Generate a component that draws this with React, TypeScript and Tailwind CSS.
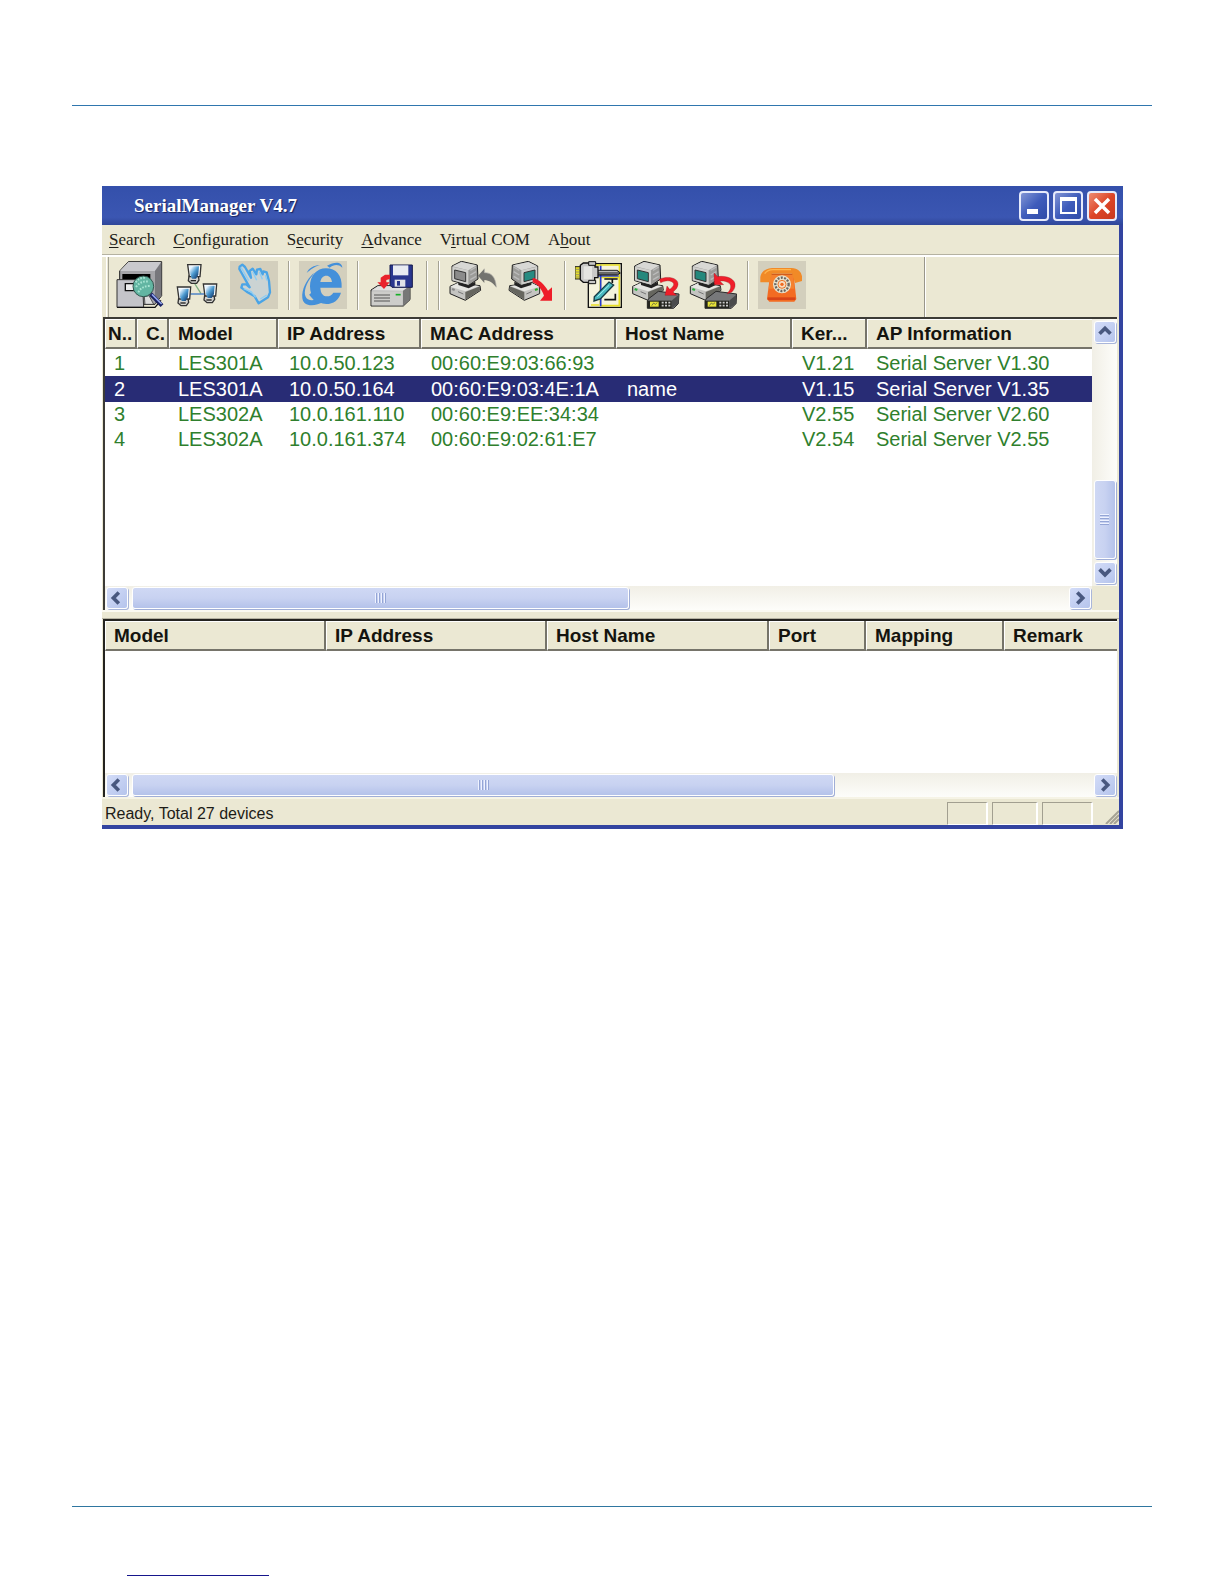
import React from "react";

type Device = {
  no: string;
  model: string;
  ip: string;
  mac: string;
  host: string;
  kernel: string;
  ap: string;
  selected?: boolean;
};

const devices: Device[] = [
  { no: "1", model: "LES301A", ip: "10.0.50.123", mac: "00:60:E9:03:66:93", host: "", kernel: "V1.21", ap: "Serial Server V1.30" },
  { no: "2", model: "LES301A", ip: "10.0.50.164", mac: "00:60:E9:03:4E:1A", host: "name", kernel: "V1.15", ap: "Serial Server V1.35", selected: true },
  { no: "3", model: "LES302A", ip: "10.0.161.110", mac: "00:60:E9:EE:34:34", host: "", kernel: "V2.55", ap: "Serial Server V2.60" },
  { no: "4", model: "LES302A", ip: "10.0.161.374", mac: "00:60:E9:02:61:E7", host: "", kernel: "V2.54", ap: "Serial Server V2.55" },
];

const menus: [string, string, string][] = [
  ["", "S", "earch"],
  ["", "C", "onfiguration"],
  ["S", "e", "curity"],
  ["", "A", "dvance"],
  ["V", "i", "rtual COM"],
  ["A", "b", "out"],
];

/* ---------- toolbar drawings ---------- */

function Art({ box, children }: { box: string; children: React.ReactNode }) {
  return (
    <svg viewBox={box} className="block size-12" aria-hidden="true">
      {children}
    </svg>
  );
}

function CabinetIcon() {
  return (
    <Art box="33 18 144 144">
      <path d="M44 48 70 20H170V122L150 148H44Z" fill="#a5a5a9" stroke="#222" strokeWidth="3" />
      <path d="M45 48 70 21H168L150 48Z" fill="#c9c9cd" />
      <path d="M150 48 169 22V122L150 147Z" fill="#77777c" />
      <path d="M52 57H136V75H52Z" fill="#000" />
      <path d="M36 74H112L116 157H36Z" fill="#c4c4c9" stroke="#333" strokeWidth="3" />
      <path d="M36 157H150L168 136" fill="none" stroke="#111" strokeWidth="4" />
      <path d="M61 86H92V107H61Z" fill="#eee" stroke="#111" strokeWidth="4" />
      <path d="M118 125 132 122 146 148H120Z" fill="#ddd" stroke="#222" strokeWidth="2" />
      <circle cx="115" cy="94" r="31" fill="#62b5a2" stroke="#32564f" strokeWidth="3" />
      <path d="M92 82q12-16 28-13M93 96q14-20 40-16M100 112q10-20 36-19" stroke="#a7e4d2" strokeWidth="6" strokeDasharray="5 4" fill="none" />
      <path d="M137 117 171 152" stroke="#182060" strokeWidth="12" />
      <path d="M141 118 170 147" stroke="#91a4ee" strokeWidth="5" />
    </Art>
  );
}

function Terminal({ x, y }: { x: number; y: number }) {
  return (
    <g transform={`translate(${x} ${y})`}>
      <path d="M5 36 3 50 12 58H28L35 48 33 36Z" fill="#d4d4d0" stroke="#333" strokeWidth="4" />
      <path d="M1 2H41L38 38H6Z" fill="#fff" stroke="#333" strokeWidth="4" />
      <path d="M6 7H35L33 32 26 44H14L9 32Z" fill="url(#screenShade)" />
      <path d="M10 50H26" stroke="#222" strokeWidth="4" />
    </g>
  );
}

function NetworkIcon() {
  return (
    <Art box="204 18 144 144">
      <defs>
        <linearGradient id="screenShade" x1="0" y1="0" x2="1" y2="1">
          <stop offset="0.15" stopColor="#e5f3ff" />
          <stop offset="0.5" stopColor="#4c9ad0" />
          <stop offset="0.9" stopColor="#123c70" />
        </linearGradient>
      </defs>
      <path d="M268 84 288 116" stroke="#7fae80" strokeWidth="4" />
      <path d="M256 117H300" stroke="#3d78c4" strokeWidth="4" />
      <Terminal x={247} y={27} />
      <Terminal x={216} y={94} />
      <Terminal x={294} y={85} />
    </Art>
  );
}

function HandIcon() {
  return (
    <Art box="375 18 144 144">
      <path
        d="M404 35 412 29 420 36 438 68 434 48 443 41 454 58 456 44 466 42 473 58 475 49 485 52 492 78 495 112 489 127 461 145 449 124 425 110 409 98 412 88 424 88 434 97 403 42Z"
        fill="#cbd3d3"
        stroke="#4aa4e6"
        strokeWidth="7"
        strokeLinejoin="round"
      />
      <path d="M408 37 431 77M443 50 455 76M463 50 472 73M481 60 486 77M416 101 438 110 452 127M466 132 485 120" fill="none" stroke="#8bcdf5" strokeWidth="4" />
    </Art>
  );
}

function BrowserIcon() {
  return (
    <Art box="627 243 144 144">
      <path
        d="M755 323H691C692 341 700 349 711 349 719 349 726 345 730 338H753C747 360 730 372 709 372 679 372 660 350 660 319 660 287 680 265 708 265 738 265 757 286 755 323ZM691 306H726C725 294 718 287 709 287 699 287 693 294 691 306Z"
        fill="#4490da"
        fillRule="evenodd"
      />
      <path d="M668 286C648 310 640 336 647 350 652 362 670 365 692 352L704 364C668 384 640 378 637 354 634 328 650 298 672 278ZM650 279C657 263 675 255 690 256 672 260 661 270 650 279ZM711 257C735 244 756 245 757 263 744 251 731 254 719 263Z" fill="#4490da" />
      <path d="M662 340 684 366" stroke="#4490da" strokeWidth="12" />
    </Art>
  );
}

function SaveIcon() {
  return (
    <Art box="834 243 144 144">
      <path d="M843 330 863 317H960V359L940 378H843Z" fill="#b9b9b9" stroke="#222" strokeWidth="3" />
      <path d="M845 331 865 319H957L940 332Z" fill="#e1e1df" />
      <path d="M939 332 958 319V358L939 377Z" fill="#777" />
      <path d="M845 334H938V376H845Z" fill="#cdcdca" />
      <path d="M852 345H900M852 354H900M852 363H900" stroke="#555" strokeWidth="3" />
      <path d="M917 344H932" stroke="#17ae27" strokeWidth="5" />
      <path d="M900 255H967V322H906L900 316Z" fill="#29368e" stroke="#151a4a" strokeWidth="3" />
      <path d="M909 256H955V286H909Z" fill="#e8ebf2" />
      <path d="M914 299H946V320H914Z" fill="#dfe1e7" />
      <path d="M921 303H930V317H921Z" fill="#29368e" />
      <path d="M900 284H885L872 293V307H862L882 327 899 307H889V300L900 297Z" fill="#e9222b" />
    </Art>
  );
}

/* Monitor on a desktop base, occupying roughly 96 x 118 units. */
function Computer({ screen, light }: { screen: string; light: string }) {
  return (
    <g strokeLinejoin="round">
      <path d="M2 76 24 66 92 74 94 88 48 118 2 98Z" fill="#c4c4c1" stroke="#222" strokeWidth="3" />
      <path d="M3 77 24 67 90 75 48 91Z" fill="#e6e6e2" />
      <path d="M48 93 92 76V88L48 116Z" fill="#66665f" />
      <path d="M27 62 57 71 78 62V72L58 82 27 72Z" fill="#222" />
      <path d="M8 15 36 1 84 12 86 54 58 73 8 59Z" fill="#9b9b98" stroke="#222" strokeWidth="3" />
      <path d="M9 16 36 3 82 13 57 28Z" fill="#d8d8d5" />
      <path d="M9 17 57 28V71L9 58Z" fill="#cfcfcc" />
      <path d="M16 27 49 35V62L16 53Z" fill={screen} stroke="#333" strokeWidth="3" />
      <path d="M63 28 80 18M63 42 80 32M63 56 80 46" stroke="#bbb" strokeWidth="4" />
      <path d="M8 84 16 87" stroke={light} strokeWidth="7" />
      <path d="M26 92 42 99" stroke="#777" strokeWidth="3" />
    </g>
  );
}

function PcUndoIcon() {
  return (
    <Art box="72 243 144 144">
      <g transform="translate(73 243)">
        <Computer screen="#8b8b8b" light="#888" />
      </g>
      <path d="M159 287 178 266V278C199 278 211 289 214 322 203 308 193 301 178 300V309Z" fill="#73736f" />
      <path d="M178 266V278C199 278 211 289 214 322" fill="none" stroke="#aaa9a4" strokeWidth="2" />
    </Art>
  );
}

function PcSendIcon() {
  return (
    <Art box="243 243 144 144">
      <g transform="translate(346 243) scale(-1 1)">
        <Computer screen="#278b82" light="#27ae27" />
      </g>
      <path d="M323 293C344 299 357 312 369 332L381 322V362H345L357 347C350 328 340 314 323 307Z" fill="#ee1d29" />
    </Art>
  );
}

function PortSettingsIcon() {
  return (
    <Art box="18 18 144 144">
      <path d="M58 26H157V157H58Z" fill="#f5f3dc" stroke="#111" strokeWidth="4" />
      <path d="M94 67H151V152H94Z" fill="none" stroke="#e9df25" strokeWidth="5" />
      <path d="M95 28V154" stroke="#263acb" strokeWidth="5" />
      <path d="M60 63H152" stroke="#263acb" strokeWidth="4" />
      <path d="M106 72H146M130 72V84M106 134H139V116" fill="none" stroke="#111" strokeWidth="5" />
      <path d="M80 30H151V65M66 150H90" fill="none" stroke="#e9df25" strokeWidth="4" />
      <path d="M76 125 120 81 134 90 94 132 75 138Z" fill="#49b9bf" stroke="#143a43" strokeWidth="4" />
      <path d="M85 125 120 91" stroke="#a2f0ee" strokeWidth="3" />
      <path d="M85 46H145L154 54 145 60H85Z" fill="#696969" stroke="#111" strokeWidth="3" />
      <path d="M88 49H145" stroke="#ccc" strokeWidth="3" />
      <path d="M34 31 43 24H78V36H87V68H77V82H43L34 74Z" fill="#c9c9c7" stroke="#111" strokeWidth="4" />
      <path d="M44 34H69V73H44Z" fill="#e5e5e1" />
      <path d="M18 35H33V72H18Z" fill="#e8df27" stroke="#222" strokeWidth="3" />
      <path d="M18 43H33M18 51H33M18 59H33M18 66H33" stroke="#777" strokeWidth="2" />
      <path d="M59 20H80V31H59ZM59 76H80V86H59Z" fill="#c9c9c7" stroke="#111" strokeWidth="3" />
    </Art>
  );
}

function ModemBody() {
  return (
    <g>
      <path d="M50 113 79 91 141 99 139 128 125 142H46V120Z" fill="#77787a" stroke="#2b2b2b" strokeWidth="3" />
      <path d="M46 119H119V141H46Z" fill="#24251f" />
      <path d="M120 118 140 101V127L120 141Z" fill="#4a4b4c" />
      <path d="M54 122H80V137H54Z" fill="#e7e339" />
      <path d="M59 134 65 126 70 130 76 125" fill="none" stroke="#444" strokeWidth="2" />
      <path d="M89 125H116M89 134H116" stroke="#c9c9c9" strokeWidth="5" strokeDasharray="6 4" />
    </g>
  );
}

function PcToDeviceIcon() {
  return (
    <Art box="189 18 144 144">
      <g transform="translate(189 18)">
        <Computer screen="#24887d" light="#27b43d" />
        <ModemBody />
        <path d="M82 55C105 43 141 50 138 71 136 83 128 88 123 93L134 103H99L105 75 113 85C125 77 130 67 119 62 108 57 99 60 86 65Z" fill="#f01e2a" stroke="#8d1820" strokeWidth="1" />
      </g>
    </Art>
  );
}

function DeviceToPcIcon() {
  return (
    <Art box="360 18 144 144">
      <g transform="translate(362 18)">
        <Computer screen="#24887d" light="#27b43d" />
        <ModemBody />
        <path d="M73 36 84 47C110 42 140 54 136 76 133 90 124 98 112 98 126 84 127 70 114 64 104 59 96 59 91 61L102 71H74Z" fill="#f01e2a" stroke="#8d1820" strokeWidth="1" />
      </g>
    </Art>
  );
}

function PhoneIcon() {
  return (
    <Art box="1002 243 144 144">
      <path d="M1038 287H1109L1117 357 1111 365H1036L1029 357Z" fill="#f36b22" />
      <path d="M1040 282H1107L1111 326H1034Z" fill="#f5812e" />
      <path d="M1009 307V291C1011 275 1025 265 1044 264H1103C1121 265 1132 275 1134 289V303L1113 309 1104 281H1044L1035 307Z" fill="#f18a27" />
      <path d="M1022 281Q1031 269 1047 269H1101" stroke="#ffb64e" strokeWidth="4" fill="none" />
      <path d="M1043 283H1105" stroke="#c9551b" strokeWidth="3" />
      <path d="M1031 356H1114" stroke="#d84418" strokeWidth="8" />
      <circle cx="1074" cy="313" r="27" fill="#e9e2cd" />
      <circle cx="1074" cy="313" r="20" fill="none" stroke="#696661" strokeWidth="7" strokeDasharray="6 4" />
      <circle cx="1074" cy="313" r="12" fill="#f6dcc1" stroke="#ec762b" strokeWidth="3" />
      <circle cx="1074" cy="313" r="5" fill="#ef681f" />
    </Art>
  );
}

function Tool({ label, tinted, children }: { label: string; tinted?: boolean; children: React.ReactNode }) {
  return (
    <button type="button" aria-label={label} className={tinted ? "size-12 shrink-0 bg-[#d3cfbd]" : "size-12 shrink-0"}>
      {children}
    </button>
  );
}

function Rule() {
  return <span className="h-[49px] w-[2px] border-l border-r border-l-[#a5a293] border-r-white" />;
}

function Divider() {
  return (
    <div className="flex w-[21px] shrink-0 justify-center">
      <Rule />
    </div>
  );
}

/* ---------- scroll bars ---------- */

const chevrons = {
  left: "M13 5 7 11 13 17",
  right: "M8 5 14 11 8 17",
  up: "M5 13 11 7 17 13",
  down: "M5 7 11 13 17 7",
};

function ScrollButton({ dir }: { dir: keyof typeof chevrons }) {
  return (
    <button
      type="button"
      aria-label={`Scroll ${dir}`}
      className="size-[22px] shrink-0 rounded-[3px] border border-white bg-gradient-to-br from-[#d3dcf8] to-[#b5c4ec] shadow-[1px_1px_0_#a9b6da]"
    >
      <svg viewBox="0 0 22 22" className="block size-5" aria-hidden="true">
        <path d={chevrons[dir]} fill="none" stroke="#49587f" strokeWidth="4" />
      </svg>
    </button>
  );
}

function HorizontalBar({ thumb }: { thumb: string }) {
  return (
    <div className="flex h-6 min-w-0 flex-1 items-center bg-gradient-to-b from-[#f1efe6] to-[#fdfdfa] pr-px pl-px">
      <ScrollButton dir="left" />
      <div className="flex h-[22px] flex-1 pl-1">
        <div
          className={`${thumb} flex items-center justify-center gap-px rounded-[3px] border border-white bg-gradient-to-b from-[#cfd8f4] via-[#c8d2f1] to-[#b4c2ea] shadow-[1px_1px_0_#a0aed6]`}
        >
          {[0, 1, 2, 3].map((i) => (
            <span key={i} className="h-[10px] w-[2px] border-l border-r border-l-[#eef2ff] border-r-[#94a5d6]" />
          ))}
        </div>
      </div>
      <ScrollButton dir="right" />
    </div>
  );
}

function VerticalBar() {
  return (
    <div className="flex w-[25px] shrink-0 flex-col items-center gap-[3px] bg-gradient-to-r from-[#f1efe6] to-[#fdfdfa] py-[2px]">
      <ScrollButton dir="up" />
      <div className="flex w-[22px] flex-1 flex-col justify-end">
        <div className="flex h-[79px] flex-col items-center justify-center gap-px rounded-[3px] border border-white bg-gradient-to-r from-[#cfd8f4] via-[#c8d2f1] to-[#b4c2ea] shadow-[1px_1px_0_#a0aed6]">
          {[0, 1, 2, 3].map((i) => (
            <span key={i} className="h-[2px] w-[9px] border-t border-b border-t-[#eef2ff] border-b-[#94a5d6]" />
          ))}
        </div>
      </div>
      <ScrollButton dir="down" />
    </div>
  );
}

/* ---------- tables ---------- */

function HeadCell({ children, pad = "pl-2", last }: { children: React.ReactNode; pad?: string; last?: boolean }) {
  return (
    <th
      scope="col"
      className={`${pad} ${last ? "" : "border-r-2 border-r-[#76746a]"} h-[30px] overflow-hidden border-b-2 border-l border-b-[#76746a] border-l-white bg-[#ebe8d3] pt-[2px] pr-0 pb-0 text-left text-[19px] leading-[26px] font-bold whitespace-nowrap text-[#14140f] shadow-[inset_0_1px_0_#fff]`}
    >
      {children}
    </th>
  );
}

function DeviceTable() {
  return (
    <table className="w-full table-fixed border-separate border-spacing-0">
      <colgroup>
        <col className="w-[32px]" />
        <col className="w-[32px]" />
        <col className="w-[109px]" />
        <col className="w-[143px]" />
        <col className="w-[195px]" />
        <col className="w-[176px]" />
        <col className="w-[75px]" />
        <col />
      </colgroup>
      <thead>
        <tr>
          <HeadCell pad="pl-[2px]">N..</HeadCell>
          <HeadCell>C.</HeadCell>
          <HeadCell>Model</HeadCell>
          <HeadCell>IP Address</HeadCell>
          <HeadCell>MAC Address</HeadCell>
          <HeadCell>Host Name</HeadCell>
          <HeadCell>Ker...</HeadCell>
          <HeadCell last>AP Information</HeadCell>
        </tr>
      </thead>
      <tbody>
        <tr aria-hidden="true">
          <td colSpan={8} className="h-[2px] p-0" />
        </tr>
        {devices.map((d) => (
          <tr
            key={d.no}
            aria-selected={d.selected ? true : undefined}
            className={
              d.selected
                ? "h-[26px] bg-[#282c75] text-[20px] leading-[25px] whitespace-nowrap text-white"
                : "h-[25px] text-[20px] leading-[25px] whitespace-nowrap text-[#2f7f2d]"
            }
          >
            <td className="p-0 pl-[9px]">{d.no}</td>
            <td className="p-0" />
            <td className="p-0 pl-[9px]">{d.model}</td>
            <td className="p-0 pl-[11px]">{d.ip}</td>
            <td className="p-0 pl-[10px]">{d.mac}</td>
            <td className="p-0 pl-[11px]">{d.host}</td>
            <td className="p-0 pl-[10px]">{d.kernel}</td>
            <td className="p-0 pl-[9px]">{d.ap}</td>
          </tr>
        ))}
      </tbody>
    </table>
  );
}

function MappingTable() {
  return (
    <table className="w-full table-fixed border-separate border-spacing-0">
      <colgroup>
        <col className="w-[221px]" />
        <col className="w-[221px]" />
        <col className="w-[222px]" />
        <col className="w-[97px]" />
        <col className="w-[138px]" />
        <col />
      </colgroup>
      <thead>
        <tr>
          <HeadCell>Model</HeadCell>
          <HeadCell>IP Address</HeadCell>
          <HeadCell>Host Name</HeadCell>
          <HeadCell>Port</HeadCell>
          <HeadCell>Mapping</HeadCell>
          <HeadCell last>Remark</HeadCell>
        </tr>
      </thead>
      <tbody />
    </table>
  );
}

const captionButton =
  "flex size-[30px] items-center justify-center rounded-[4px] border-2 border-[#e6eafb] bg-gradient-to-br";

export default function App() {
  return (
    <div className="flex min-h-screen flex-col bg-white font-['Liberation_Sans',Arial,sans-serif]">
      <header className="mx-[72px] h-[106px] border-b border-[#2f76ae]" />

      <main className="mt-20 mr-[101px] ml-[102px] border-r-4 border-b-4 border-[#3344a0] bg-[#ebe8d3]">
        {/* The caption runs over the right frame edge. */}
        <div className="-mr-1 flex h-[39px] items-center justify-between bg-gradient-to-b from-[#3450ab] via-[#3b56b2] via-80% to-[#2f4699] pr-[6px] pl-8">
          <h1 className="font-['Liberation_Serif',serif] text-[19px] leading-6 font-bold text-white [text-shadow:1px_1px_1px_#14225c]">
            SerialManager V4.7
          </h1>
          <div className="flex gap-1">
            <button type="button" aria-label="Minimize" className={`${captionButton} from-[#8294d4] via-[#3f5cbb] to-[#2f4ba8]`}>
              <span className="mt-3 mr-1 h-[5px] w-[11px] bg-white" />
            </button>
            <button type="button" aria-label="Maximize" className={`${captionButton} from-[#8294d4] via-[#3f5cbb] to-[#2f4ba8]`}>
              <span className="size-[17px] border-2 border-t-4 border-white" />
            </button>
            <button type="button" aria-label="Close" className={`${captionButton} from-[#ee8a70] via-[#dd4527] to-[#c93a20]`}>
              <svg viewBox="0 0 20 20" className="size-5" aria-hidden="true">
                <path d="M3 3 17 17M17 3 3 17" stroke="#fff" strokeWidth="3.5" />
              </svg>
            </button>
          </div>
        </div>

        <nav className="flex h-[30px] items-center gap-[18px] border-b border-[#b5b2a1] pl-[7px] font-['Liberation_Serif',serif] text-[17px] leading-5 text-[#1d1c17]">
          {menus.map(([before, key, after]) => (
            <button key={before + key + after} type="button">
              {before}
              <span className="underline underline-offset-2">{key}</span>
              {after}
            </button>
          ))}
        </nav>

        <div className="flex h-[62px] border-t-2 border-white pl-[4px]">
          <span className="h-full w-[3px] shrink-0 border-r border-l border-r-[#a5a293] border-l-white" />
          <div className="flex w-[816px] shrink-0 items-start border-r border-[#99968a] pt-1 pl-[7px]">
            <div className="flex gap-[9px]">
              <Tool label="Search devices"><CabinetIcon /></Tool>
              <Tool label="Search network"><NetworkIcon /></Tool>
              <Tool label="Assign IP" tinted><HandIcon /></Tool>
            </div>
            <Divider />
            <Tool label="Open web page" tinted><BrowserIcon /></Tool>
            <Divider />
            <Tool label="Save settings"><SaveIcon /></Tool>
            <div className="flex w-[33px] shrink-0 justify-center gap-[10px]">
              <Rule />
              <Rule />
            </div>
            <div className="flex gap-[9px]">
              <Tool label="Import settings"><PcUndoIcon /></Tool>
              <Tool label="Export settings"><PcSendIcon /></Tool>
            </div>
            <Divider />
            <div className="flex gap-[9px]">
              <Tool label="Virtual port settings"><PortSettingsIcon /></Tool>
              <Tool label="Map to device"><PcToDeviceIcon /></Tool>
              <Tool label="Map to computer"><DeviceToPcIcon /></Tool>
            </div>
            <Divider />
            <Tool label="Contact" tinted><PhoneIcon /></Tool>
          </div>
          <span className="w-px bg-white" />
        </div>

        <section aria-label="Devices" className="mr-[2px] ml-px border-t-2 border-l-2 border-[#3c3b36] bg-white">
          <div className="flex h-[267px]">
            <div className="min-w-0 flex-1">
              <DeviceTable />
            </div>
            <VerticalBar />
          </div>
          <div className="flex">
            <HorizontalBar thumb="w-[53%]" />
            <div className="w-[25px] bg-[#ebe8d3]" />
          </div>
        </section>

        <div className="h-[9px] border-t-2 border-b border-t-[#fbfaf1] border-b-[#b5b2a1]" />

        <section aria-label="Port mappings" className="mr-[2px] ml-px border-t-2 border-l-2 border-[#24231f] bg-white">
          <div className="h-[152px]">
            <MappingTable />
          </div>
          <div className="flex">
            <HorizontalBar thumb="w-[73%]" />
          </div>
        </section>

        <footer className="flex h-[28px] items-end border-t-2 border-[#f6f4e6] pl-[3px] text-[16px] text-[#1d1c17]">
          <span role="status" className="flex-1 pb-px leading-5">Ready, Total 27 devices</span>
          <div className="flex h-[23px] gap-1 pr-3">
            <span className="w-[41px] border-t border-r-2 border-b border-l border-t-[#a29f90] border-r-white border-b-white border-l-[#a29f90]" />
            <span className="w-[46px] border-t border-r-2 border-b border-l border-t-[#a29f90] border-r-white border-b-white border-l-[#a29f90]" />
            <span className="w-[51px] border-t border-r-2 border-b border-l border-t-[#a29f90] border-r-white border-b-white border-l-[#a29f90]" />
          </div>
          <svg viewBox="0 0 14 14" className="mb-px size-[14px]" aria-hidden="true">
            <path d="M1 14 14 1M5 14 14 5M9 14 14 9" stroke="#a5a294" strokeWidth="2" />
          </svg>
        </footer>
      </main>

      <footer className="mx-[72px] mt-auto h-[78px] border-t border-[#2f76a0]">
        <div className="mt-[68px] ml-[55px] w-[142px] border-b border-[#16168c]" />
      </footer>
    </div>
  );
}
